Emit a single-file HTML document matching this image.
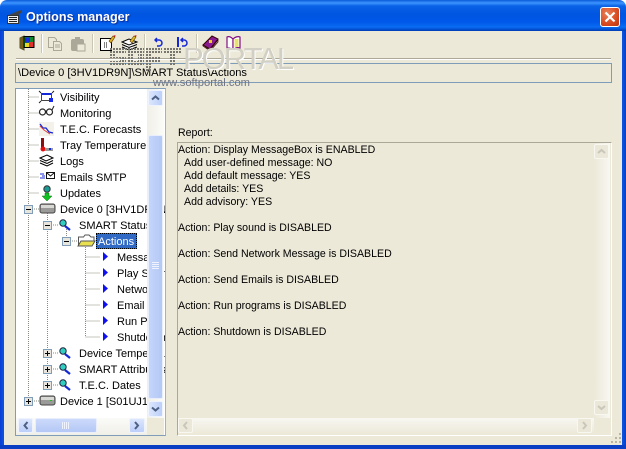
<!DOCTYPE html>
<html><head><meta charset="utf-8">
<style>
html,body{margin:0;padding:0;background:#fff}
#w{position:relative;width:626px;height:449px;overflow:hidden;background:#fff;font-family:"Liberation Sans",sans-serif;font-size:10.6px;color:#000}
#w div,#w svg,#w span{position:absolute}
.t{white-space:pre;line-height:14px;height:14px}
.tr{left:0;top:0}
#tree .t{font-size:11px}
.b{background:linear-gradient(90deg,#dce6fc,#bccffa);border:1px solid #eef3fd;box-sizing:border-box;border-radius:2px}
.g{background:#ebe8d9;border:1px solid #f8f7f0;box-sizing:border-box;border-radius:2px;width:15px;height:15px}
</style></head><body>
<div id="w">
<div style="left:0;top:0;width:626px;height:31px;border-radius:7px 7px 0 0;background:linear-gradient(180deg,#0a5ad8 0,#3d95ff 3px,#0a62e6 6px,#0055e0 14px,#0058ea 22px,#0a6cf2 27px,#0048c8 30px,#003cb0 31px)"></div>
<div style="left:0;top:31px;width:4px;height:415px;background:linear-gradient(90deg,#0a3fd0,#0a55e8)"></div>
<div style="left:622px;top:31px;width:4px;height:415px;background:linear-gradient(90deg,#0a55e8,#0a3fc0)"></div>
<div style="left:0;top:445px;width:626px;height:4px;background:#0a3fc4"></div>
<div style="left:4px;top:31px;width:618px;height:414px;background:#ece9d8"></div>

<svg style="left:6px;top:9px" width="18" height="16" viewBox="0 0 18 16"><path d="M1.500 6.500h11v8h-11z" fill="#eee" stroke="#333"/><path d="M3 8.500h8M3 10.500h8M3 12.500h8" stroke="#222"/><path d="M3 6l9-4 4-1-1 3-3 2z" fill="#444"/></svg>
<div class="t" style="left:26px;top:9px;font:bold 12.6px/16px 'Liberation Sans',sans-serif;color:#fff;text-shadow:1px 1px 1px #0a2a90;height:16px">Options manager</div>
<div style="left:600px;top:7px;width:18px;height:18px;border:1px solid #fff;border-radius:3px;background:radial-gradient(circle at 35% 30%,#e8825c,#d84a20 60%,#bd3510)"></div>
<svg style="left:600px;top:7px" width="20" height="20" viewBox="0 0 20 20"><path d="M5.500 5.500l9 9M14.500 5.500l-9 9" stroke="#fff" stroke-width="2.200"/></svg>

<svg style="left:19px;top:35px" width="16" height="16" viewBox="0 0 16 16"><path d="M1 3l4-2v14l-4-2z" fill="#7b5a10" stroke="#553"/><rect x="5" y="1.500" width="10" height="11" fill="#0a8a2a" stroke="#000"/><rect x="6" y="2.500" width="5" height="5" fill="#1a2ae0"/><rect x="10" y="7" width="4" height="5" fill="#e03030"/><rect x="6" y="8" width="4" height="4" fill="#e8d820"/></svg>
<div style="left:41px;top:34px;width:1px;height:19px;background:#c9c6b5;border-right:1px solid #fff"></div>
<svg style="left:47px;top:36px" width="16" height="16" viewBox="0 0 16 16"><path d="M1.500 1.500h6l2 2v8h-8z" fill="#ece9d8" stroke="#aca899"/><path d="M6.500 5.500h6l2 2v7h-8z" fill="#ece9d8" stroke="#aca899"/><path d="M8 9h5M8 11h5" stroke="#aca899"/></svg>
<svg style="left:70px;top:36px" width="17" height="16" viewBox="0 0 17 16"><rect x="1" y="3" width="13" height="12" rx="2" fill="#aca899"/><rect x="5" y="1" width="5" height="3" fill="#aca899"/><rect x="7" y="8" width="8" height="7" fill="#ece9d8" stroke="#aca899"/></svg>
<div style="left:92px;top:34px;width:1px;height:19px;background:#c9c6b5;border-right:1px solid #fff"></div>
<svg style="left:99px;top:34px" width="17" height="18" viewBox="0 0 17 18"><rect x="1.500" y="4.500" width="11" height="12" fill="#fff" stroke="#000"/><path d="M5 9h1M7 9h1M5 11h1M7 11h1M5 13h1M7 13h1" stroke="#000"/><path d="M10 7l4-5 2 1-4 6z" fill="#d8b020" stroke="#603000" stroke-width=".6"/><path d="M14 2l2 1 .5-2z" fill="#d01010"/></svg>
<svg style="left:121px;top:34px" width="18" height="18" viewBox="0 0 18 18"><path d="M1 8l7-3 8 3-8 3zM1 10.500l7 3 8-3M1 13l7 3 8-3" fill="#fff" stroke="#000"/><path d="M9 7l4-5 2 1-4 6z" fill="#d8c020" stroke="#603000" stroke-width=".6"/><path d="M13 2l2 1 .5-2z" fill="#d01010"/></svg>
<div style="left:144px;top:34px;width:1px;height:19px;background:#c9c6b5;border-right:1px solid #fff"></div>
<svg style="left:154px;top:37px" width="9" height="11" viewBox="0 0 9 11"><path d="M3 1L1 3l2 2M1 3h4a3 3 0 0 1 0 6H3" fill="none" stroke="#1428d8" stroke-width="1.500"/></svg>
<svg style="left:177px;top:37px" width="11" height="11" viewBox="0 0 11 11"><path d="M1 0v10" stroke="#1428d8" stroke-width="2"/><path d="M6 1L4 3l2 2M4 3h3a3 3 0 0 1 0 6H5" fill="none" stroke="#1428d8" stroke-width="1.500"/></svg>
<div style="left:196px;top:34px;width:1px;height:19px;background:#c9c6b5;border-right:1px solid #fff"></div>
<svg style="left:202px;top:34px" width="18" height="18" viewBox="0 0 18 18"><path d="M1 11L10 2l6 3-8 10z" fill="#8a1a90" stroke="#300"/><path d="M1 11l7 5 8-10v2l-8 9-7-5z" fill="#e8e8d0" stroke="#300" stroke-width=".7"/><rect x="7" y="6" width="3" height="3" fill="#e8d020"/></svg>
<svg style="left:226px;top:35px" width="16" height="16" viewBox="0 0 16 16"><path d="M1 2c2-1 4 0 6 2v11c-2-2-4-2-6-2z" fill="#fff" stroke="#801080" stroke-width="1.200"/><path d="M7 4c2-2 5-3 7-2v11c-3-1-5 0-7 2z" fill="#fff" stroke="#801080" stroke-width="1.200"/><rect x="8.500" y="4" width="4" height="8" fill="#e8e070"/></svg>

<div style="left:16px;top:58px;width:595px;height:1px;background:#aca899;border-bottom:1px solid #fff"></div>
<div style="left:15px;top:63px;width:595px;height:18px;border:1px solid #7f9db9"></div>
<div class="t" style="left:18px;top:66px;font-size:11.1px">\Device 0 [3HV1DR9N]\SMART Status\Actions</div>

<div style="left:15px;top:88px;width:149px;height:346px;background:#fff;border:1px solid #7f9db9;border-right-color:#9fb3c8;overflow:hidden" id="tree">
<svg class="tr" width="132" height="330" style="left:0;top:0"><g stroke="#8a8a80" stroke-dasharray="1 1" fill="none"><path d="M12.500 0V312M12.500 8H23M12.500 24H23M12.500 40H23M12.500 56H23M12.500 72H23M12.500 88H23M12.500 104H23M31.500 124V296M37 136H43M37 264H43M37 280H43M37 296H43M50.500 140V148M56 152H62M69.500 158V248M69.500 168H84M69.500 184H84M69.500 200H84M69.500 216H84M69.500 232H84M69.500 248H84M18 120H23M18 312H23"/></g></svg>
<div class="t" style="left:44px;top:2px">Visibility</div>
<div class="t" style="left:44px;top:18px">Monitoring</div>
<div class="t" style="left:44px;top:34px">T.E.C. Forecasts</div>
<div class="t" style="left:44px;top:50px">Tray Temperature</div>
<div class="t" style="left:44px;top:66px">Logs</div>
<div class="t" style="left:44px;top:82px">Emails SMTP</div>
<div class="t" style="left:44px;top:98px">Updates</div>
<div class="t" style="left:44px;top:114px">Device 0 [3HV1DR9N]</div>
<div class="t" style="left:63px;top:130px">SMART Status</div>
<div style="left:80px;top:144px;width:41px;height:16px;background:#316ac5;outline:1px dotted #000;outline-offset:-1px"></div>
<div class="t" style="left:82px;top:146px;color:#fff">Actions</div>
<div class="t" style="left:101px;top:162px">Message</div>
<div class="t" style="left:101px;top:178px">Play Sound</div>
<div class="t" style="left:101px;top:194px">Network</div>
<div class="t" style="left:101px;top:210px">Email</div>
<div class="t" style="left:101px;top:226px">Run Prog</div>
<div class="t" style="left:101px;top:242px">Shutdown</div>
<div class="t" style="left:63px;top:258px">Device Temperature</div>
<div class="t" style="left:63px;top:274px">SMART Attributes</div>
<div class="t" style="left:63px;top:290px">T.E.C. Dates</div>
<div class="t" style="left:44px;top:306px">Device 1 [S01UJ1]</div>

<svg class="tr" width="131" height="330" viewBox="0 0 131 330" style="left:0;top:0">
<g>
<rect x="25.500" y="4.500" width="10" height="7" fill="#fff" stroke="#444"/><rect x="26" y="4" width="9" height="2" fill="#1428d8"/><rect x="33" y="9" width="4" height="4" fill="#1428f0"/><path d="M23 2l2 2M38 2l-2 2M23 14l2-2" stroke="#222"/>
<circle cx="26.500" cy="23" r="3" fill="none" stroke="#222" stroke-width="1.200"/><circle cx="33.500" cy="23" r="3" fill="none" stroke="#222" stroke-width="1.200"/><path d="M29 22h2M36 21l2-4" stroke="#222"/>
<rect x="23" y="33" width="15" height="14" fill="#f4f2e8"/><path d="M24 35l3 4 3 0 3 4 4 1" fill="none" stroke="#1428d8" stroke-width="1.300"/><path d="M24 37l4 4 6 4" fill="none" stroke="#e04040"/>
<rect x="25" y="49" width="3" height="10" fill="#8a1010"/><circle cx="27" cy="60" r="2.500" fill="#e01010"/><rect x="29" y="59" width="8" height="3" fill="#9a9a98"/><rect x="33" y="59" width="2" height="2" fill="#1428d8"/>
<path d="M24 69l7-3 6 3-7 3zM24 71.500l7 3 6-3M24 74l7 3 6-3" fill="#fff" stroke="#000"/>
<rect x="30.500" y="83.500" width="8" height="6" fill="#fff" stroke="#111"/><path d="M31 84l3.500 3 3.500-3" fill="none" stroke="#111"/><path d="M24 85h4M26 87h3M24 89h5" stroke="#1428d8"/>
<circle cx="31" cy="100" r="3.200" fill="#1a9a90" stroke="#333"/><path d="M29 104h4v3h3l-5 5-5-5h3z" fill="#10c020" stroke="#0a7010" stroke-width=".5"/>
<rect x="24" y="115" width="15" height="9" rx="2" fill="#9a9a98" stroke="#444"/><rect x="25" y="116" width="13" height="3" fill="#d8d8d4"/>
<circle cx="47" cy="134" r="3.200" fill="#30d0c0" stroke="#224"/><path d="M49 137l5 4" stroke="#1428d8" stroke-width="2.200"/>
<path d="M62.500 157v-9h5l1.500-2h4l2 2h3v4" fill="#fff" stroke="#555"/><path d="M62 157l3-5h14l-3 5z" fill="#e8e050" stroke="#555"/>
<path d="M87 163v9l5-4.500zM87 179v9l5-4.500zM87 195v9l5-4.500zM87 211v9l5-4.500zM87 227v9l5-4.500zM87 243v9l5-4.500z" fill="#1010f0"/>
<circle cx="47" cy="262" r="3.200" fill="#30d0c0" stroke="#224"/><path d="M49 265l5 4" stroke="#1428d8" stroke-width="2.200"/>
<circle cx="47" cy="278" r="3.200" fill="#30d0c0" stroke="#224"/><path d="M49 281l5 4" stroke="#1428d8" stroke-width="2.200"/>
<circle cx="47" cy="294" r="3.200" fill="#30d0c0" stroke="#224"/><path d="M49 297l5 4" stroke="#1428d8" stroke-width="2.200"/>
<rect x="24" y="307" width="15" height="9" rx="2" fill="#9a9a98" stroke="#444"/><rect x="25" y="308" width="13" height="3" fill="#d8d8d4"/><rect x="34" y="311" width="2" height="1" fill="#20c020"/>
</g>
<g fill="#e8e6dc" stroke="#7f9db9">
<rect x="8.500" y="116.500" width="8" height="8"/><rect x="27.500" y="132.500" width="8" height="8"/><rect x="46.500" y="148.500" width="8" height="8"/><rect x="27.500" y="260.500" width="8" height="8"/><rect x="27.500" y="276.500" width="8" height="8"/><rect x="27.500" y="292.500" width="8" height="8"/><rect x="8.500" y="308.500" width="8" height="8"/>
</g>
<path d="M10 120.500h5M29 136.500h5M48 152.500h5M29 264.500h5M31.500 262v5M29 280.500h5M31.500 278v5M29 296.500h5M31.500 294v5M10 312.500h5M12.500 310v5" stroke="#000"/>
</svg>

<div style="left:131px;top:0;width:17px;height:329px;background:linear-gradient(90deg,#f0efe8,#fbfbf8)"></div>
<div style="left:132px;top:46px;width:15px;height:264px;background:linear-gradient(90deg,#c5d5fa,#b4c8f6);border:1px solid #e8eefc;box-sizing:border-box;border-radius:2px"></div>
<div class="b" style="left:132px;top:1px;width:15px;height:16px"></div>
<div class="b" style="left:132px;top:312px;width:15px;height:16px"></div>
<svg class="tr" style="left:132px;top:1px" width="15" height="16"><path d="M4 9.500l3.500-3 3.500 3" fill="none" stroke="#4d6185" stroke-width="2"/></svg>
<svg class="tr" style="left:132px;top:312px" width="15" height="16"><path d="M4 6.500l3.500 3 3.500-3" fill="none" stroke="#4d6185" stroke-width="2"/></svg>
<svg class="tr" style="left:135px;top:173px" width="9" height="8"><path d="M1 .5h7M1 2.500h7M1 4.500h7M1 6.500h7" stroke="#eef3fd"/></svg>

<div style="left:0;top:329px;width:131px;height:17px;background:linear-gradient(180deg,#fbfbf8,#f0efe8)"></div>
<div style="left:131px;top:329px;width:17px;height:17px;background:#ece9d8"></div>
<div class="b" style="left:2px;top:329px;width:15px;height:15px;background:linear-gradient(180deg,#dce6fc,#bccffa)"></div>
<div style="left:19px;top:329px;width:62px;height:15px;background:linear-gradient(180deg,#ccdafb,#b4c8f6);border:1px solid #e8eefc;box-sizing:border-box;border-radius:2px"></div>
<div class="b" style="left:113px;top:329px;width:16px;height:15px;background:linear-gradient(180deg,#dce6fc,#bccffa)"></div>
<svg class="tr" style="left:2px;top:329px" width="15" height="15"><path d="M9.500 4l-3 3.500 3 3.500" fill="none" stroke="#4d6185" stroke-width="2"/></svg>
<svg class="tr" style="left:113px;top:329px" width="16" height="15"><path d="M6 4l3 3.500-3 3.500" fill="none" stroke="#4d6185" stroke-width="2"/></svg>
<svg class="tr" style="left:46px;top:333px" width="9" height="8"><path d="M.5 0v7M2.500 0v7M4.500 0v7M6.500 0v7" stroke="#eef3fd"/></svg>
</div>

<div class="t" style="left:178px;top:126px">Report:</div>
<div style="left:177px;top:142px;width:433px;height:292px;border:1px solid;border-color:#aca899 #fff #fff #aca899"></div>
<div style="left:594px;top:143px;width:16px;height:275px;background:linear-gradient(90deg,#ece9d8,#f8f7f2)"></div>
<div style="left:178px;top:418px;width:416px;height:16px;background:linear-gradient(180deg,#f8f7f2,#ece9d8)"></div>
<div class="t" style="left:178px;top:143px">Action: Display MessageBox is ENABLED</div>
<div class="t" style="left:184px;top:156px">Add user-defined message: NO</div>
<div class="t" style="left:184px;top:169px">Add default message: YES</div>
<div class="t" style="left:184px;top:182px">Add details: YES</div>
<div class="t" style="left:184px;top:195px">Add advisory: YES</div>
<div class="t" style="left:178px;top:221px">Action: Play sound is DISABLED</div>
<div class="t" style="left:178px;top:247px">Action: Send Network Message is DISABLED</div>
<div class="t" style="left:178px;top:273px">Action: Send Emails is DISABLED</div>
<div class="t" style="left:178px;top:299px">Action: Run programs is DISABLED</div>
<div class="t" style="left:178px;top:325px">Action: Shutdown is DISABLED</div>

<div class="g" style="left:594px;top:144px"></div>
<div class="g" style="left:594px;top:400px"></div>
<div class="g" style="left:577px;top:418px"></div>
<div class="g" style="left:178px;top:418px"></div>
<svg style="left:594px;top:144px" width="15" height="15"><path d="M4 9l3.500-3 3.500 3" fill="none" stroke="#c9c7ba" stroke-width="2"/></svg>
<svg style="left:594px;top:400px" width="15" height="15"><path d="M4 6l3.500 3 3.500-3" fill="none" stroke="#c9c7ba" stroke-width="2"/></svg>
<svg style="left:577px;top:418px" width="15" height="15"><path d="M6 4l3 3.500-3 3.500" fill="none" stroke="#c9c7ba" stroke-width="2"/></svg>
<svg style="left:178px;top:418px" width="15" height="15"><path d="M9 4l-3 3.500 3 3.500" fill="none" stroke="#c9c7ba" stroke-width="2"/></svg>
<svg style="left:610px;top:432px" width="12" height="12"><path d="M9 1h2v2H9zM5 5h2v2H5zM9 5h2v2H9zM1 9h2v2H1zM5 9h2v2H5zM9 9h2v2H9z" fill="#b8b5a4"/></svg>

<svg style="left:110px;top:48px" width="73" height="24"><defs><pattern id="d" width="3" height="3" patternUnits="userSpaceOnUse"><rect width="2" height="2" fill="#77776f"/></pattern></defs><path d="M0 0h16v6H6v3h10v9H0v-5h10v-3H0zM18 0h16v18H18zM24 6v7h4V6zM36 0h16v6H42v3h8v5h-8v10h-6zM54 0h18v6h-6v12h-6V6h-6z" fill="url(#d)" fill-rule="evenodd"/></svg>
<div class="t" style="left:183px;top:42px;height:34px;font:31px/34px 'Liberation Sans',sans-serif;color:#d2d0c4;text-shadow:1px 1px 0 #fff;letter-spacing:-2px">PORTAL</div>
<div class="t" style="left:153px;top:76px;color:#6f7484;font-size:11.2px">www.softportal.com</div>
</div>
</body></html>
